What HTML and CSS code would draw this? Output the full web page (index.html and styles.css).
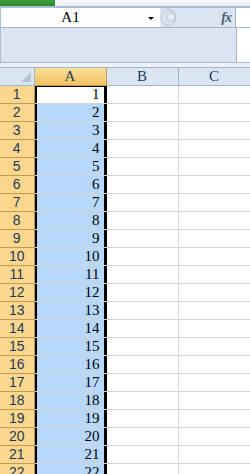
FILE: index.html
```html
<!DOCTYPE html>
<html lang="en">
<head>
    <meta charset="UTF-8">
    <meta name="viewport" content="width=device-width, initial-scale=1.0">
    <title>Sheet1</title>
    <link rel="stylesheet" href="styles.css">
</head>
<body>
    <div class="window">
        <!-- Ribbon edge -->
        <div class="topbar">
            <div class="file-tab"></div>
        </div>

        <!-- Name box + formula bar -->
        <div class="formula-row">
            <div class="name-box">
                <span class="cell-ref">A1</span>
                <span class="drop-arrow"></span>
            </div>
            <div class="formula-bar">
                <span class="knob"></span>
                <span class="fx"><i>f</i><i>x</i></span>
            </div>
            <div class="side-white"></div>
        </div>
        <div class="formula-expand">
            <div class="expand-area"></div>
            <div class="side-white"></div>
        </div>
        <div class="split-gap"></div>

        <!-- Sheet grid -->
        <table class="sheet">
            <colgroup>
                <col class="col-head">
                <col class="col-cell">
                <col class="col-cell">
                <col class="col-cell">
            </colgroup>
            <thead>
                <tr>
                    <th class="corner"><span class="corner-tri"></span></th>
                    <th class="col-label active">A</th>
                    <th class="col-label">B</th>
                    <th class="col-label">C</th>
                </tr>
            </thead>
            <tbody id="rows"></tbody>
        </table>
    </div>

    <script>
        // Fill rows 1..22, column A holds its row number
        const body = document.getElementById('rows');
        for (let i = 1; i <= 22; i++) {
            const tr = document.createElement('tr');
            tr.innerHTML =
                '<th class="row-label">' + i + '</th>' +
                '<td class="sel' + (i === 1 ? ' current' : '') + '">' + i + '</td>' +
                '<td></td><td></td>';
            body.appendChild(tr);
        }
    </script>
</body>
</html>
```

FILE: styles.css
```css
body {
    margin: 0;
    padding: 0;
    background: #fff;
    font-family: "Liberation Serif", serif;
    overflow: hidden;
}

.window {
    width: 250px;
    height: 474px;
    overflow: hidden;
}

/* top strip */
.topbar {
    height: 6px;
    background: linear-gradient(#f7f8fa, #e9edf2);
    border-bottom: 2px solid #a9bdd6;
}

.file-tab {
    width: 55px;
    height: 6px;
    background: linear-gradient(#3f9d3c, #2c8a2e);
}

/* name box and formula bar */
.formula-row {
    display: flex;
    height: 19px;
    border-bottom: 1px solid #a3b2c6;
}

.name-box {
    width: 159px;
    border-left: 1px solid #a9bdd6;
    background: #fff;
    position: relative;
    display: flex;
    align-items: center;
    justify-content: center;
}

.cell-ref {
    font-size: 15px;
    color: #000;
    margin-right: 20px;
}

.drop-arrow {
    position: absolute;
    left: 147px;
    top: 9px;
    width: 0;
    height: 0;
    border-left: 3px solid transparent;
    border-right: 3px solid transparent;
    border-top: 3px solid #000;
}

.formula-bar {
    width: 76px;
    background: #dbe5f1;
    border-right: 1px solid #a3b2c6;
    display: flex;
    align-items: center;
    justify-content: space-between;
    padding-right: 4px;
    box-sizing: border-box;
}

.knob {
    width: 15px;
    height: 17px;
    margin-left: 1px;
    border: 1px solid #b4c1d1;
    border-radius: 9px;
    background: radial-gradient(circle at 9px 7px, #e9eef4 2px, #c9d3de 4px, #dfe6ee 7px);
    box-sizing: border-box;
}

.fx {
    font-family: "Liberation Serif", serif;
    font-weight: bold;
    font-size: 14px;
    color: #4a5d78;
    letter-spacing: -1px;
}

.side-white {
    flex: 1;
    background: #fff;
}

.formula-expand {
    display: flex;
    height: 34px;
    border-bottom: 1px solid #a7b8cf;
}

.expand-area {
    width: 235px;
    background: #dbe5f1;
    border-left: 1px solid #a9bdd6;
    border-right: 1px solid #a3b2c6;
}

.split-gap {
    height: 4px;
    background: #eef2f8;
    border-bottom: 1px solid #9eb6ce;
}

/* grid */
.sheet {
    border-collapse: collapse;
    table-layout: fixed;
    width: 250px;
}

.col-head {
    width: 34px;
}

.col-cell {
    width: 72px;
}

.sheet th,
.sheet td {
    height: 17px;
    padding: 0;
    box-sizing: content-box;
    line-height: 17px;
    overflow: hidden;
    white-space: nowrap;
}

.sheet td {
    border-right: 1px solid #d4d4d4;
    border-bottom: 1px solid #d4d4d4;
    font-size: 15px;
    text-align: right;
    padding-right: 5px;
}

.corner {
    background: #dbe5f1;
    border-right: 1px solid #9eb6ce;
    border-bottom: 1px solid #9eb6ce;
    position: relative;
}

.corner-tri {
    position: absolute;
    right: 3px;
    bottom: 3px;
    width: 0;
    height: 0;
    border-left: 10px solid transparent;
    border-bottom: 10px solid #b6c3d3;
}

.col-label {
    background: #dbe5f1;
    border-right: 1px solid #9eb6ce;
    border-bottom: 1px solid #9eb6ce;
    color: #1e395b;
    font-weight: normal;
    font-size: 15px;
}

.col-label.active {
    background: linear-gradient(#f9df9a, #f1c15f);
    border-right-color: #c29b52;
    border-bottom-color: #c29b52;
}

.row-label {
    background: #fad78d;
    border-right: 1px solid #c29b52;
    border-bottom: 1px solid #c29b52;
    color: #1e395b;
    font-family: "Liberation Sans", sans-serif;
    font-weight: normal;
    font-size: 14px;
    text-align: center;
}

.sheet td.sel {
    background: #b8d8fb;
    border-right: 1px solid #000;
    box-shadow: inset 2px 0 0 #000, inset -2px 0 0 #000;
    padding-right: 6px;
}

.sheet td.current {
    background: #fff;
    box-shadow: inset 2px 0 0 #000, inset -2px 0 0 #000, inset 0 1px 0 #000;
}
```
